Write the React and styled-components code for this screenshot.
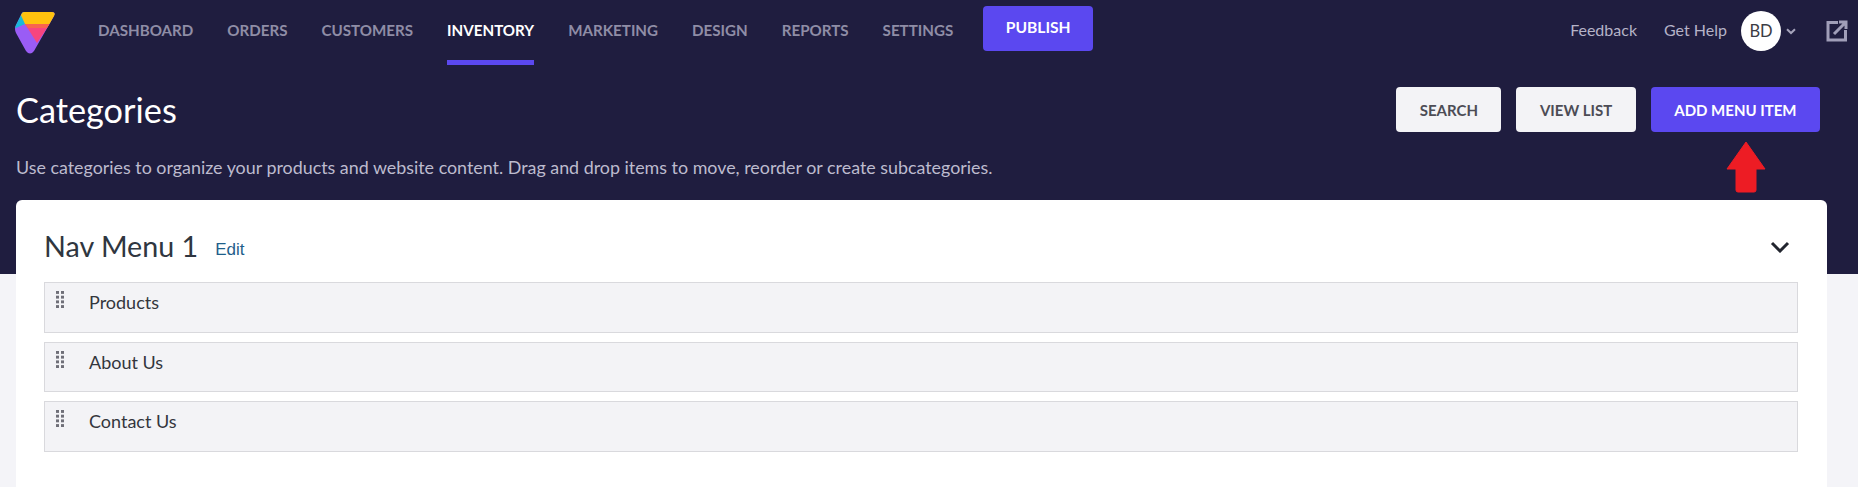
import styled, { createGlobalStyle } from 'styled-components';

const GlobalStyle = createGlobalStyle`
  html, body {
    margin: 0;
    padding: 0;
  }
  body {
    font-family: Lato, "Open Sans", sans-serif;
    background: linear-gradient(#1f1d3f 274px, #f4f4f8 274px);
    min-height: 487px;
    overflow: hidden;
  }
`;

const NAV_ITEMS = ['DASHBOARD', 'ORDERS', 'CUSTOMERS', 'INVENTORY', 'MARKETING', 'DESIGN', 'REPORTS', 'SETTINGS'];
const MENU_ROWS = ['Products', 'About Us', 'Contact Us'];

function Logo() {
  return (
    <LogoSvg viewBox="0 0 42 44" width="42" height="44">
      <defs>
        <clipPath id="logoShape">
          <path d="M10 1 H38 Q42 1 40 5 L20 40 Q16 45 12 40 L2 22 Q0 18 2 14 L7 4 Q8 1 10 1 Z" />
        </clipPath>
      </defs>
      <g clipPath="url(#logoShape)">
        <rect width="42" height="44" fill="#9a5cf5" />
        <polygon points="0,0 12,0 11,13 2,17 0,17" fill="#19b8d8" />
        <polygon points="5,0 42,0 42,13 11,13" fill="#ffc20e" />
        <polygon points="11,13 36,13 23,32" fill="#f7457f" />
        <polygon points="11,13 36,13 33,17 14,17" fill="#f8644f" />
      </g>
    </LogoSvg>
  );
}

function GripIcon() {
  return (
    <Grip viewBox="0 0 8 17" width="8" height="17" fill="#6f6f78">
      {[0, 4.7, 9.4, 14.1].map((y) => (
        <g key={y}>
          <rect x="0" y={y} width="3" height="2.9" />
          <rect x="5" y={y} width="3" height="2.9" />
        </g>
      ))}
    </Grip>
  );
}

export default function App() {
  return (
    <>
      <GlobalStyle />
      <TopBar>
        <Logo />
        <Nav>
          {NAV_ITEMS.map((item) => (
            <NavLink key={item} $active={item === 'INVENTORY'}>
              {item}
            </NavLink>
          ))}
        </Nav>
        <PublishButton>PUBLISH</PublishButton>
        <TopRight>
          <TopLink>Feedback</TopLink>
          <TopLink>Get Help</TopLink>
          <Avatar>BD</Avatar>
          <SmallChevron viewBox="0 0 10 7" width="10" height="7">
            <path d="M1 1.2 L5 5 L9 1.2" fill="none" stroke="#a5a3bb" strokeWidth="2" />
          </SmallChevron>
          <ExternalIcon viewBox="0 0 22 22" width="22" height="22">
            <path
              d="M12 2.5 H2 V20 H19.5 V10 M13 2 H20 V9 M20 2 L8 14"
              fill="none"
              stroke="#a09eb8"
              strokeWidth="3"
            />
          </ExternalIcon>
        </TopRight>
      </TopBar>

      <PageHead>
        <PageTitle>Categories</PageTitle>
        <Actions>
          <ActionButton>SEARCH</ActionButton>
          <ActionButton>VIEW LIST</ActionButton>
          <ActionButton $primary>
            ADD MENU ITEM
            <RedArrow viewBox="0 0 40 52" width="40" height="52">
              <path
                d="M20 1 L39 28 L30 28 V49 Q30 51 28 51 H12 Q10 51 10 49 V28 L1 28 Z"
                fill="#ed1c24"
                stroke="#ed1c24"
                strokeLinejoin="round"
              />
            </RedArrow>
          </ActionButton>
        </Actions>
      </PageHead>

      <Description>
        Use categories to organize your products and website content. Drag and drop items to move, reorder or create
        subcategories.
      </Description>

      <Card>
        <CardHead>
          <CardTitle>Nav Menu 1</CardTitle>
          <EditLink>Edit</EditLink>
          <CollapseIcon viewBox="0 0 20 12" width="20" height="12">
            <path d="M2 2 L10 10 L18 2" fill="none" stroke="#22252e" strokeWidth="3" />
          </CollapseIcon>
        </CardHead>
        <RowList>
          {MENU_ROWS.map((row) => (
            <MenuRow key={row}>
              <GripIcon />
              <RowLabel>{row}</RowLabel>
            </MenuRow>
          ))}
        </RowList>
      </Card>
    </>
  );
}

const TopBar = styled.header`
  display: flex;
  align-items: flex-start;
  height: 65px;
  padding: 0 8px 0 14px;
`;

const LogoSvg = styled.svg`
  flex: none;
  margin-top: 11px;
`;

const Nav = styled.nav`
  display: flex;
  gap: 34px;
  margin-left: 42px;
`;

const NavLink = styled.a`
  display: block;
  height: 65px;
  box-sizing: border-box;
  padding-top: 21px;
  font-size: 15.15px;
  line-height: 18px;
  font-weight: 700;
  white-space: nowrap;
  color: #8f8da6;
  ${(p) => p.$active && 'color: #ffffff;'}
  border-bottom: 5px solid ${(p) => (p.$active ? '#5b48f0' : 'transparent')};
`;

const PublishButton = styled.button`
  width: 110px;
  height: 45px;
  margin: 6px 0 0 30px;
  border: 0;
  border-radius: 4px;
  background: #5b48f0;
  color: #fff;
  font-family: inherit;
  font-size: 15.6px;
  font-weight: 700;
  padding: 0 0 3px;
`;

const TopRight = styled.div`
  display: flex;
  align-items: center;
  margin-left: auto;
  margin-top: 11px;
  height: 40px;
`;

const TopLink = styled.a`
  font-size: 16px;
  color: #b5b3c7;
  margin-right: 27px;
  margin-top: -3px;
  &:nth-child(2) {
    margin-right: 14px;
  }
`;

const Avatar = styled.div`
  width: 40px;
  height: 40px;
  border-radius: 50%;
  background: #fff;
  color: #3c3c44;
  font-size: 16.5px;
  display: flex;
  align-items: center;
  justify-content: center;
`;

const SmallChevron = styled.svg`
  margin-left: 5px;
`;

const ExternalIcon = styled.svg`
  margin-left: 30px;
  margin-right: 2px;
`;

const PageHead = styled.div`
  display: flex;
  justify-content: space-between;
  align-items: flex-start;
  padding: 22px 38px 0 16px;
`;

const PageTitle = styled.h1`
  margin: 0;
  font-size: 34.3px;
  line-height: 46px;
  font-weight: 400;
  color: #fff;
`;

const Actions = styled.div`
  display: flex;
  gap: 15px;
`;

const ActionButton = styled.button`
  position: relative;
  height: 45px;
  padding: 0 23.5px;
  border: 0;
  border-radius: 4px;
  font-family: inherit;
  font-size: 15px;
  font-weight: 700;
  white-space: nowrap;
  background: ${(p) => (p.$primary ? '#5b48f0' : '#f3f3f6')};
  color: ${(p) => (p.$primary ? '#fff' : '#4c4c55')};
`;

const RedArrow = styled.svg`
  position: absolute;
  left: 75px;
  top: 54px;
`;

const Description = styled.p`
  margin: 22px 0 0;
  padding: 0 16px;
  font-size: 17.86px;
  line-height: 24px;
  color: #bdbbce;
`;

const Card = styled.section`
  margin: 21px 31px 0 16px;
  height: 287px;
  box-sizing: border-box;
  padding: 27px 29px 0 28px;
  background: #fff;
  border-radius: 6px 6px 0 0;
`;

const CardHead = styled.div`
  display: flex;
  align-items: center;
  height: 38px;
`;

const CardTitle = styled.h2`
  margin: 0;
  font-size: 28.7px;
  line-height: 38px;
  font-weight: 400;
  color: #2f3640;
`;

const EditLink = styled.a`
  margin: 8px 0 0 17px;
  font-family: "Liberation Sans", Arial, sans-serif;
  font-size: 17px;
  color: #1f5f8b;
`;

const CollapseIcon = styled.svg`
  margin-left: auto;
  margin-right: 8px;
  margin-top: 2px;
`;

const RowList = styled.div`
  display: flex;
  flex-direction: column;
  gap: 9px;
  margin-top: 17px;
`;

const MenuRow = styled.div`
  display: flex;
  align-items: flex-start;
  height: 50.5px;
  box-sizing: border-box;
  padding: 7px 11px;
  background: #f3f3f6;
  border: 1px solid #d9d9dd;
`;

const Grip = styled.svg`
  flex: none;
  margin-top: 1px;
`;

const RowLabel = styled.span`
  margin-left: 25px;
  font-size: 18px;
  line-height: 24px;
  color: #33363d;
`;
